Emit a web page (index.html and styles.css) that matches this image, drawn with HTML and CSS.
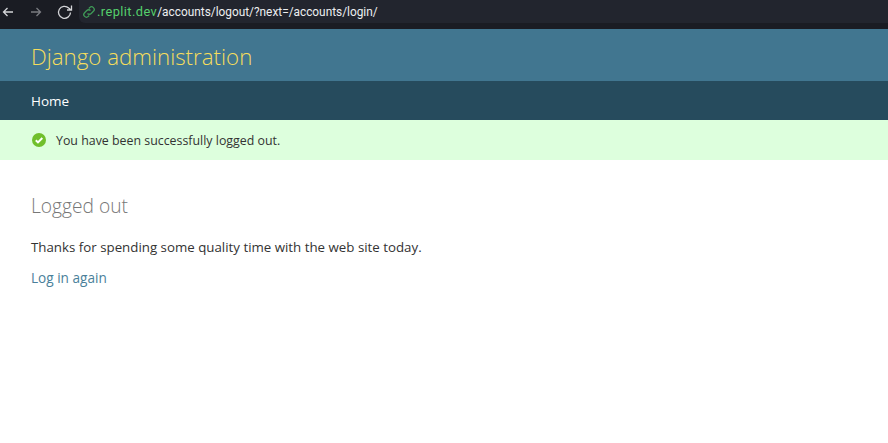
FILE: index.html
```html
<!DOCTYPE html>
<html lang="en">
<head>
<meta charset="utf-8">
<title>Logged out | Django site admin</title>
<link rel="stylesheet" href="styles.css">
</head>
<body>
<div class="chrome">
  <div class="chrome-nav">
    <svg class="nav-icon" width="12" height="12" viewBox="0 0 12 12"><path d="M11 6H1.500M5.500 2 1.500 6l4 4" class="stroke-light"/></svg>
    <svg class="nav-icon" width="12" height="12" viewBox="0 0 12 12"><path d="M1 6h9.500M6.500 2l4 4-4 4" class="stroke-dim"/></svg>
    <svg class="nav-icon reload" width="16" height="16" viewBox="0 0 16 16"><path d="M13.500 8.500a6 6 0 1 1-1.800-4.500L14 6M14.500 1.500V6H10" class="stroke-light"/></svg>
  </div>
  <div class="omnibox">
    <svg class="link-icon" width="14" height="14" viewBox="0 0 14 14"><path d="M5.500 8.500a2.600 2.600 0 0 0 3.700 0l2.200-2.200A2.600 2.600 0 0 0 7.700 2.600L6.800 3.500M8.500 5.500a2.600 2.600 0 0 0-3.700 0L2.600 7.700a2.600 2.600 0 0 0 3.700 3.700l.9-.9" class="stroke-green"/></svg>
    <span class="url"><span class="url-host">.replit.dev</span>/accounts/logout/?next=/accounts/login/</span>
  </div>
</div>
<header class="branding"><h1 class="site-name">Django administration</h1></header>
<nav class="breadcrumbs"><a href="#">Home</a></nav>
<div class="message">
  <svg class="msg-icon" width="14" height="14" viewBox="0 0 14 14"><circle cx="7" cy="7" r="7" fill="#70bf2b"/><path d="M3.800 7.200 6 9.400l4.300-4.400" fill="none" stroke="#fff" stroke-width="2"/></svg>
  <span>You have been successfully logged out.</span>
</div>
<main class="content">
  <h2 class="title">Logged out</h2>
  <p class="thanks">Thanks for spending some quality time with the web site today.</p>
  <p class="again"><a href="#">Log in again</a></p>
</main>
</body>
</html>
```
FILE: styles.css
```css
* { box-sizing: border-box; }
html, body { margin: 0; padding: 0; background: #fff; }
body { font-family: "Open Sans", "Noto Sans", sans-serif; color: #333; overflow: hidden; }
a { text-decoration: none; }
h1, h2, p { margin: 0; font-weight: 400; }

.chrome { height: 29px; background: #1a1c23; display: flex; align-items: flex-start; }
.chrome-nav { display: flex; align-items: center; height: 23px; width: 79px; padding-left: 2px; }
.nav-icon { flex: none; margin-right: 16px; }
.reload { margin-right: 0; margin-left: -1px; }
.stroke-light, .stroke-dim, .stroke-green { fill: none; stroke-width: 1.300; }
.stroke-light { stroke: #d4d5d8; }
.stroke-dim { stroke: #7a7b80; }
.stroke-green { stroke: #3f9a57; }
.omnibox { flex: 1; height: 23px; background: #22252e; border-bottom-left-radius: 6px; display: flex; align-items: center; padding-left: 3px; }
.link-icon { flex: none; }
.url { font-family: "Roboto", "Open Sans", sans-serif; font-size: 11.850px; color: #eceef0; margin-left: 1px; white-space: nowrap; }
.url-host { font-size: 12.800px; letter-spacing: .43px; color: #55d06c; }

.branding { height: 52px; background: #417690; padding: 10px 31px 0; }
.site-name { font-size: 22.300px; font-weight: 300; color: #f5dd5d; line-height: 36px; }

.breadcrumbs { height: 39px; background: #264b5d; padding-left: 31px; display: flex; align-items: center; }
.breadcrumbs a { font-size: 13.500px; color: #fff; }

.message { height: 40px; background: #dfd; display: flex; align-items: center; padding-left: 32px; gap: 10px; font-size: 12.380px; color: #333; }
.msg-icon { flex: none; }

.content { padding: 33px 31px 0; }
.title { font-size: 19.200px; font-weight: 300; color: #777; line-height: 26px; }
.thanks { font-size: 13.300px; line-height: 20px; margin-top: 18px; color: #333; }
.again { font-size: 13.600px; line-height: 20px; margin-top: 11px; }
.again a { color: #4a7f9a; }
```
